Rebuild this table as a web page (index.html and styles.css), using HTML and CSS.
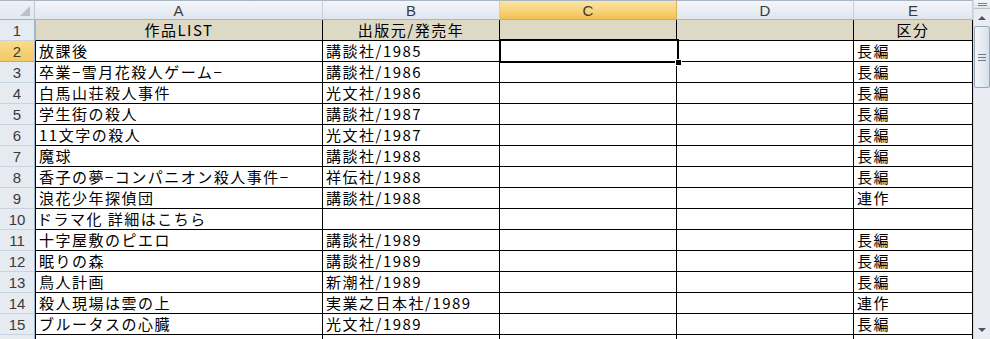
FILE: index.html
```html
<!DOCTYPE html>
<html lang="ja">
<head>
<meta charset="utf-8">
<title>作品LIST</title>
<link rel="stylesheet" href="styles.css">
</head>
<body>
<div class="window">
  <div class="sheet">
    <div class="grid">
      <div class="corner"><span class="corner-tri"></span></div>
      <div class="colhead">A</div>
      <div class="colhead">B</div>
      <div class="colhead active">C</div>
      <div class="colhead">D</div>
      <div class="colhead">E</div>

      <div class="rowhead">1</div>
      <div class="cell title a">作品LIST</div>
      <div class="cell title">出版元/発売年</div>
      <div class="cell title"></div>
      <div class="cell title"></div>
      <div class="cell title">区分</div>

      <div class="rowhead active">2</div>
      <div class="cell a">放課後</div><div class="cell">講談社/1985</div><div class="cell"></div><div class="cell"></div><div class="cell">長編</div>
      <div class="rowhead">3</div>
      <div class="cell a">卒業−雪月花殺人ゲーム−</div><div class="cell">講談社/1986</div><div class="cell"></div><div class="cell"></div><div class="cell">長編</div>
      <div class="rowhead">4</div>
      <div class="cell a">白馬山荘殺人事件</div><div class="cell">光文社/1986</div><div class="cell"></div><div class="cell"></div><div class="cell">長編</div>
      <div class="rowhead">5</div>
      <div class="cell a">学生街の殺人</div><div class="cell">講談社/1987</div><div class="cell"></div><div class="cell"></div><div class="cell">長編</div>
      <div class="rowhead">6</div>
      <div class="cell a">11文字の殺人</div><div class="cell">光文社/1987</div><div class="cell"></div><div class="cell"></div><div class="cell">長編</div>
      <div class="rowhead">7</div>
      <div class="cell a">魔球</div><div class="cell">講談社/1988</div><div class="cell"></div><div class="cell"></div><div class="cell">長編</div>
      <div class="rowhead">8</div>
      <div class="cell a">香子の夢−コンパニオン殺人事件−</div><div class="cell">祥伝社/1988</div><div class="cell"></div><div class="cell"></div><div class="cell">長編</div>
      <div class="rowhead">9</div>
      <div class="cell a">浪花少年探偵団</div><div class="cell">講談社/1988</div><div class="cell"></div><div class="cell"></div><div class="cell">連作</div>
      <div class="rowhead">10</div>
      <div class="cell a link">ドラマ化 詳細はこちら</div><div class="cell"></div><div class="cell"></div><div class="cell"></div><div class="cell"></div>
      <div class="rowhead">11</div>
      <div class="cell a">十字屋敷のピエロ</div><div class="cell">講談社/1989</div><div class="cell"></div><div class="cell"></div><div class="cell">長編</div>
      <div class="rowhead">12</div>
      <div class="cell a">眠りの森</div><div class="cell">講談社/1989</div><div class="cell"></div><div class="cell"></div><div class="cell">長編</div>
      <div class="rowhead">13</div>
      <div class="cell a">鳥人計画</div><div class="cell">新潮社/1989</div><div class="cell"></div><div class="cell"></div><div class="cell">長編</div>
      <div class="rowhead">14</div>
      <div class="cell a">殺人現場は雲の上</div><div class="cell">実業之日本社/1989</div><div class="cell"></div><div class="cell"></div><div class="cell">連作</div>
      <div class="rowhead">15</div>
      <div class="cell a">ブルータスの心臓</div><div class="cell">光文社/1989</div><div class="cell"></div><div class="cell"></div><div class="cell">長編</div>
      <div class="rowhead"></div>
      <div class="cell a"></div><div class="cell"></div><div class="cell"></div><div class="cell"></div><div class="cell"></div>
    </div>
    <!-- active cell frame over C2 -->
    <div class="selection"><span class="fill-handle"></span></div>
  </div>

  <div class="vscroll">
    <div class="split-box"><span></span></div>
    <div class="arrow up"></div>
    <div class="track">
      <div class="thumb"><span class="grip"></span></div>
    </div>
    <div class="arrow down"></div>
  </div>
</div>
</body>
</html>
```

FILE: styles.css
```css
* { box-sizing: border-box; }

html, body {
  margin: 0;
  padding: 0;
  background: #ffffff;
}

.window {
  display: flex;
  width: 990px;
  height: 339px;
  overflow: hidden;
}

.sheet {
  position: relative;
  width: 973px;
  height: 339px;
  overflow: hidden;
}

.grid {
  display: grid;
  grid-template-columns: 35px 288px 177px 177px 177px 119px;
  grid-template-rows: 20px repeat(16, 21px);
}

/* header strip */
.corner {
  position: relative;
  background: linear-gradient(#eef2f7, #e2e8f0);
  border-right: 1px solid #b9c6d5;
  border-bottom: 1px solid #9eb6ce;
  border-top: 1px solid #a9b5c3;
}
.corner-tri {
  position: absolute;
  right: 4px;
  bottom: 3px;
  width: 0;
  height: 0;
  border-left: 10px solid transparent;
  border-bottom: 10px solid #b8c1cc;
}

.colhead {
  background: linear-gradient(#f2f5f9 0%, #e9eef4 55%, #dfe6ee 100%);
  border-right: 1px solid #c5d0dc;
  border-bottom: 1px solid #9eb6ce;
  border-top: 1px solid #a9b5c3;
  font-family: "Liberation Sans", "DejaVu Sans", sans-serif;
  font-size: 15px;
  color: #3a3a3a;
  text-align: center;
  line-height: 19px;
}
.colhead.active {
  background: linear-gradient(#fbe4a6 0%, #f8d57e 50%, #f1c14f 100%);
  border-bottom-color: #e0a83a;
  border-right-color: #d9b45e;
}

.rowhead {
  background: #e6ebf2;
  border-right: 1px solid #9eb6ce;
  border-bottom: 1px solid #c9d3de;
  font-family: "Liberation Sans", "DejaVu Sans", sans-serif;
  font-size: 15px;
  color: #3a3a3a;
  text-align: center;
  line-height: 21px;
}
.rowhead.active {
  background: linear-gradient(#f9dc8c, #f4c862);
  border-bottom-color: #d7a64a;
}

/* data cells */
.cell {
  border-right: 1px solid #000;
  border-bottom: 1px solid #000;
  padding: 0 0 0 3px;
  font-family: "Noto Sans CJK JP", "DejaVu Sans", sans-serif;
  font-size: 15px;
  letter-spacing: 1.5px;
  line-height: 20px;
  color: #000;
  white-space: nowrap;
  overflow: hidden;
  background: #fff;
}
.cell.a {
  border-left: 1px solid #000;
  padding-left: 3px;
}
.cell.title {
  background: #ddd9c4;
  text-align: center;
  padding: 0;
  border-right-color: #000;
}
.cell.title.a {
  border-left-color: #9eb6ce;
}
.cell.link {
  padding-left: 1px;
}

/* active cell frame */
.selection {
  position: absolute;
  left: 499px;
  top: 39px;
  width: 180px;
  height: 24px;
  border: 2px solid #000;
  box-shadow: inset 0 0 0 1px #fff;
}
.fill-handle {
  position: absolute;
  right: -5px;
  bottom: -5px;
  width: 7px;
  height: 7px;
  background: #000;
  border: 1px solid #fff;
}

/* vertical scrollbar */
.vscroll {
  width: 17px;
  height: 339px;
  display: flex;
  flex-direction: column;
  background: #e9edf3;
  border-left: 1px solid #d3dae3;
}
.split-box {
  height: 9px;
  display: flex;
  align-items: center;
  justify-content: center;
  background: linear-gradient(#f4f6f9, #dfe5ec);
  border-bottom: 1px solid #b9c3cf;
}
.split-box span {
  width: 9px;
  height: 3px;
  border-top: 1px solid #7a8593;
  border-bottom: 1px solid #7a8593;
}
.arrow {
  height: 17px;
  position: relative;
}
.arrow::after {
  content: "";
  position: absolute;
  left: 4px;
  width: 0;
  height: 0;
  border-left: 4px solid transparent;
  border-right: 4px solid transparent;
}
.arrow.up::after {
  top: 7px;
  border-bottom: 4px solid #4d5560;
}
.arrow.down::after {
  top: 6px;
  border-top: 4px solid #4d5560;
}
.track {
  flex: 1;
  position: relative;
}
.thumb {
  position: absolute;
  left: 0;
  right: 0;
  top: 0;
  height: 62px;
  border: 1px solid #9ba7b6;
  border-radius: 2px;
  background: linear-gradient(90deg, #f3f6fa 0%, #e3e9f1 60%, #d6dee8 100%);
  display: flex;
  align-items: center;
  justify-content: center;
}
.grip {
  width: 8px;
  height: 7px;
  background: repeating-linear-gradient(#6f7a88 0 1px, transparent 1px 3px);
}
```
